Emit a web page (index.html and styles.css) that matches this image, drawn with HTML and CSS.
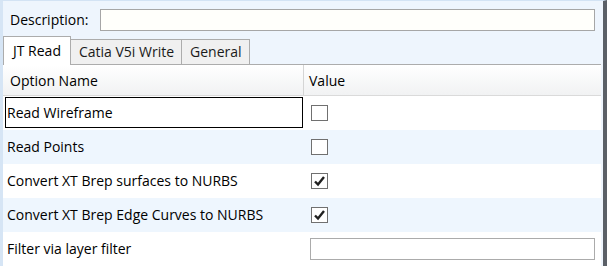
FILE: index.html
```html
<!DOCTYPE html>
<html lang="en">

<head>
    <meta charset="UTF-8">
    <meta name="viewport" content="width=device-width, initial-scale=1.0">
    <title>Options</title>
    <link rel="stylesheet" href="styles.css">
</head>

<body>
    <div class="window">
        <div class="desc-row">
            <label for="description">Description:</label>
            <input type="text" id="description" class="desc-input">
        </div>

        <div class="tabs">
            <div class="tab active">JT Read</div>
            <div class="tab">Catia V5i Write</div>
            <div class="tab">General</div>
        </div>

        <div class="panel">
            <div class="grid-header">
                <div class="cell name-col">Option Name</div>
                <div class="cell value-col">Value</div>
            </div>

            <div class="grid-row">
                <div class="cell name-col"><span class="focus">Read Wireframe</span></div>
                <div class="cell value-col"><span class="check"></span></div>
            </div>
            <div class="grid-row alt">
                <div class="cell name-col"><span class="plain">Read Points</span></div>
                <div class="cell value-col"><span class="check"></span></div>
            </div>
            <div class="grid-row">
                <div class="cell name-col"><span class="plain">Convert XT Brep surfaces to NURBS</span></div>
                <div class="cell value-col">
                    <span class="check">
                        <svg width="13" height="12" viewBox="0 0 13 12"><path d="M2 6.5 L5 9.5 L11 2" fill="none" stroke="#202020" stroke-width="2.4"/></svg>
                    </span>
                </div>
            </div>
            <div class="grid-row alt">
                <div class="cell name-col"><span class="plain">Convert XT Brep Edge Curves to NURBS</span></div>
                <div class="cell value-col">
                    <span class="check">
                        <svg width="13" height="12" viewBox="0 0 13 12"><path d="M2 6.5 L5 9.5 L11 2" fill="none" stroke="#202020" stroke-width="2.4"/></svg>
                    </span>
                </div>
            </div>
            <div class="grid-row">
                <div class="cell name-col"><span class="plain">Filter via layer filter</span></div>
                <div class="cell value-col"><input type="text" class="value-input"></div>
            </div>
        </div>
    </div>
</body>

</html>
```

FILE: styles.css
```css
body {
    margin: 0;
    width: 607px;
    height: 266px;
    overflow: hidden;
    font-family: "Open Sans", "Noto Sans", sans-serif;
    font-size: 14px;
    color: #000;
    background-color: #eef5fd;
}

.window {
    box-sizing: border-box;
    height: 266px;
    border-top: 1px solid #d3e3f4;
    border-left: 3px solid #d6e5f5;
    border-right: 4px solid #5b6067;
    padding-right: 2px;
}

.desc-row {
    display: flex;
    align-items: center;
    height: 35px;
    padding-left: 7px;
}

.desc-row label {
    width: 90px;
    padding-top: 1px;
}

.desc-input {
    box-sizing: border-box;
    width: 495px;
    height: 22px;
    margin-top: 2px;
    border: 1px solid #a6a6a6;
    background-color: #fffffb;
}

.tabs {
    display: flex;
    align-items: flex-end;
    height: 28px;
    border-bottom: 1px solid #acacac;
}

.tab {
    box-sizing: border-box;
    height: 25px;
    padding: 0 7px 0 8px;
    line-height: 23px;
    color: #1a1a1a;
    background-color: #f0f0f0;
    border: 1px solid #acacac;
    border-bottom: none;
    border-left: none;
}

.tab.active {
    height: 29px;
    margin-bottom: -1px;
    padding: 2px 9px 0 9px;
    color: #000;
    background-color: #fff;
    border-left: 1px solid #acacac;
}

.panel {
    background-color: #fff;
    height: 202px;
}

.grid-header {
    display: flex;
    height: 30px;
    background: linear-gradient(#ffffff, #f1f2f3);
    border-bottom: 1px solid #dadada;
}

.grid-header .cell {
    display: flex;
    align-items: center;
}

.grid-header .name-col {
    padding-left: 7px;
    border-right: 1px solid #d5d5d5;
}

.grid-header .value-col {
    padding-left: 5px;
}

.cell {
    box-sizing: border-box;
}

.name-col {
    width: 301px;
}

.value-col {
    flex: 1;
}

.grid-row {
    display: flex;
    height: 34px;
}

.grid-row.alt {
    background-color: #eef6fe;
}

.grid-row .name-col {
    padding: 1px 2px 2px 2px;
}

.focus,
.plain {
    box-sizing: border-box;
    display: flex;
    align-items: center;
    height: 31px;
    padding-left: 1px;
    border: 1px solid transparent;
}

.focus {
    width: 298px;
    border-color: #000;
}

.grid-row .value-col {
    display: flex;
    align-items: center;
    padding-left: 7px;
}

.check {
    box-sizing: border-box;
    display: flex;
    align-items: center;
    justify-content: center;
    width: 17px;
    height: 16px;
    border: 1px solid #707070;
    background-color: #fff;
}

.value-input {
    box-sizing: border-box;
    width: 285px;
    height: 22px;
    margin-left: -1px;
    border: 1px solid #ababab;
    background-color: #fff;
}
```
